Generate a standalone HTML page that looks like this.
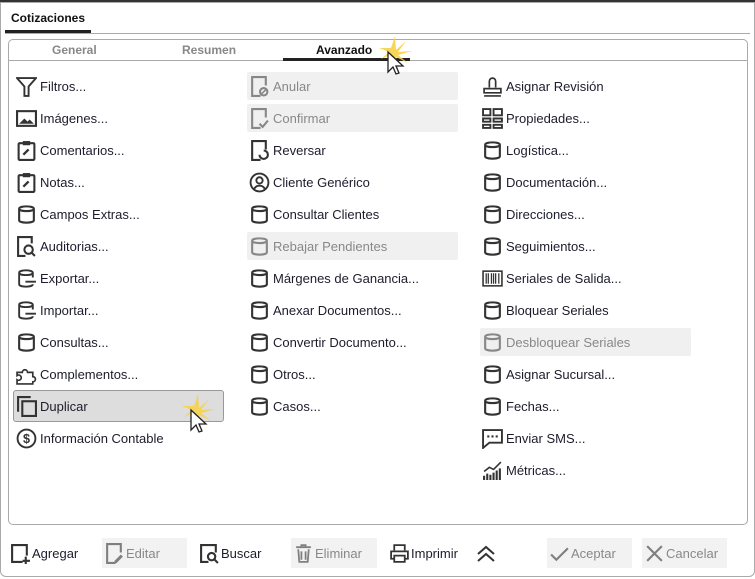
<!DOCTYPE html>
<html><head><meta charset="utf-8"><style>
*{box-sizing:border-box}
body{margin:0;width:755px;height:579px;background:#fff;font-family:"Liberation Sans",sans-serif;font-size:13px;color:#1c1c2c;position:relative;overflow:hidden}
.win{position:absolute;left:0;top:2px;width:755px;height:575px;border:1px solid #aaa;border-radius:0 0 6px 6px}
.topbar{position:absolute;left:0;top:0;width:755px;height:2px;background:#333}
.ttab{position:absolute;left:11px;top:11px;font-weight:bold;font-size:12px;color:#111}
.tline{position:absolute;left:5px;top:30px;width:86px;height:3px;background:#222}
.hr{position:absolute;left:5px;top:33px;width:745px;height:1px;background:#aaa}
.panel{position:absolute;left:8px;top:39px;width:740px;height:486px;border:1px solid #aaa;border-radius:5px}
.tabs{position:absolute;left:9px;top:40px;width:738px;height:21px;border-bottom:1px solid #aaa}
.th{position:absolute;top:43px;font-weight:bold;font-size:12px;color:#888}
.uline{position:absolute;left:283px;top:58px;width:127px;height:3px;background:#222}
.it{position:absolute;height:28px;line-height:30px;width:211px;padding-left:26px;white-space:nowrap}
.it svg{position:absolute;left:2px;top:4px;width:21px;height:21px}
.dis{background:#f0f0f0;color:#888;border-radius:2px}
.dis svg{opacity:.55}
.sel{background:#ddd;border:1px solid #999;border-radius:3px;height:32px;line-height:32px}
.bb{position:absolute;top:538px;height:30px;line-height:31px;padding-left:24px;white-space:nowrap}
.bb svg{position:absolute;left:2px;top:5px;width:21px;height:21px}
.bd{background:#f2f2f2;color:#888}
.bd svg{opacity:.6}
</style></head><body>
<svg width="0" height="0" style="position:absolute">
<defs>
<symbol id="cyl" viewBox="0 0 20 20"><path d="M3 4.5c0-3 14-3 14 0v11c0 3-14 3-14 0z M3 4.5c0 3 14 3 14 0" fill="none" stroke="#333" stroke-width="2"/></symbol>
<symbol id="clip" viewBox="0 0 20 20"><rect x="2.5" y="3" width="15" height="16" rx="1" fill="none" stroke="#333" stroke-width="2"/><rect x="6.5" y="1" width="7" height="4" fill="#333"/><path d="M7 14l5-5" stroke="#333" stroke-width="2.2"/></symbol>
<symbol id="doc" viewBox="0 0 20 20"><path d="M11 19H3V1h13v8" fill="none" stroke="#333" stroke-width="2"/></symbol>
</defs></svg>
<div class="topbar"></div>
<div class="win"></div>
<div class="ttab">Cotizaciones</div><div class="tline"></div><div class="hr"></div>
<div class="panel"></div><div class="tabs"></div>
<div class="th" style="left:52px">General</div>
<div class="th" style="left:182px">Resumen</div>
<div class="th" style="left:316px;color:#111">Avanzado</div>
<div class="uline"></div>

<div class="it" style="left:14px;top:72px"><svg viewBox="0 0 20 20"><path d="M1 2h18l-7 8v9h-4v-9z" fill="none" stroke="#333" stroke-width="1.8"/></svg>Filtros...</div>
<div class="it" style="left:14px;top:104px"><svg viewBox="0 0 20 20"><rect x="1" y="3" width="18" height="14" fill="none" stroke="#333" stroke-width="2"/><path d="M3 15l5-5 3 3 2-2 4 4z" fill="#333"/></svg>Imágenes...</div>
<div class="it" style="left:14px;top:136px"><svg viewBox="0 0 20 20"><use href="#clip"/></svg>Comentarios...</div>
<div class="it" style="left:14px;top:168px"><svg viewBox="0 0 20 20"><use href="#clip"/></svg>Notas...</div>
<div class="it" style="left:14px;top:200px"><svg viewBox="0 0 20 20"><use href="#cyl"/></svg>Campos Extras...</div>
<div class="it" style="left:14px;top:232px"><svg viewBox="0 0 20 20"><path d="M9 19H2V1h13v6" fill="none" stroke="#333" stroke-width="2"/><circle cx="12" cy="13" r="4" fill="none" stroke="#333" stroke-width="2"/><path d="M15 16l3 3" stroke="#333" stroke-width="2"/></svg>Auditorias...</div>
<div class="it" style="left:14px;top:264px"><svg viewBox="0 0 20 20"><path d="M16 9V4.5c0-3-13-3-13 0v11c0 3 13 3 13 0 M3 4.5c0 3 13 3 13 0 M9 13h10" fill="none" stroke="#333" stroke-width="1.8"/></svg>Exportar...</div>
<div class="it" style="left:14px;top:296px"><svg viewBox="0 0 20 20"><path d="M16 9V4.5c0-3-13-3-13 0v11c0 3 13 3 13 0 M3 4.5c0 3 13 3 13 0 M9 13h10" fill="none" stroke="#333" stroke-width="1.8"/></svg>Importar...</div>
<div class="it" style="left:14px;top:328px"><svg viewBox="0 0 20 20"><use href="#cyl"/></svg>Consultas...</div>
<div class="it" style="left:14px;top:360px"><svg viewBox="0 0 20 20"><path d="M1 8h5a2.5 2.5 0 1 1 5 0h5v4a2.5 2.5 0 1 1 0 5v2H1v-4a2.5 2.5 0 1 0 0-4z" fill="none" stroke="#333" stroke-width="1.6"/></svg>Complementos...</div>
<div class="it sel" style="left:13px;top:390px"><svg viewBox="0 0 20 20" style="top:5px"><rect x="6" y="5" width="13" height="14" fill="none" stroke="#333" stroke-width="2"/><path d="M2 15V1h12" fill="none" stroke="#333" stroke-width="2"/></svg>Duplicar</div>
<div class="it" style="left:14px;top:424px"><svg viewBox="0 0 20 20"><circle cx="10" cy="10" r="8.5" fill="none" stroke="#333" stroke-width="1.8"/><text x="10" y="14.5" font-size="12" text-anchor="middle" font-weight="bold" fill="#333" font-family="Liberation Sans">$</text></svg>Información Contable</div>

<div class="it dis" style="left:247px;top:72px"><svg viewBox="0 0 20 20"><use href="#doc"/><circle cx="14" cy="15" r="3.5" fill="none" stroke="#333" stroke-width="2"/><path d="M12 17l4-4" stroke="#333" stroke-width="1.5"/></svg>Anular</div>
<div class="it dis" style="left:247px;top:104px"><svg viewBox="0 0 20 20"><use href="#doc"/><path d="M10 15l3 3 5-6" fill="none" stroke="#333" stroke-width="2"/></svg>Confirmar</div>
<div class="it" style="left:247px;top:136px"><svg viewBox="0 0 20 20"><use href="#doc"/><path d="M10 14a4 4 0 1 0 4-4" fill="none" stroke="#333" stroke-width="2"/></svg>Reversar</div>
<div class="it" style="left:247px;top:168px"><svg viewBox="0 0 20 20"><circle cx="10" cy="10" r="8.5" fill="none" stroke="#333" stroke-width="1.8"/><circle cx="10" cy="8" r="3" fill="none" stroke="#333" stroke-width="1.8"/><path d="M5 16c2-4 8-4 10 0" fill="none" stroke="#333" stroke-width="1.8"/></svg>Cliente Genérico</div>
<div class="it" style="left:247px;top:200px"><svg viewBox="0 0 20 20"><use href="#cyl"/></svg>Consultar Clientes</div>
<div class="it dis" style="left:247px;top:232px"><svg viewBox="0 0 20 20"><use href="#cyl"/></svg>Rebajar Pendientes</div>
<div class="it" style="left:247px;top:264px"><svg viewBox="0 0 20 20"><use href="#cyl"/></svg>Márgenes de Ganancia...</div>
<div class="it" style="left:247px;top:296px"><svg viewBox="0 0 20 20"><use href="#cyl"/></svg>Anexar Documentos...</div>
<div class="it" style="left:247px;top:328px"><svg viewBox="0 0 20 20"><use href="#cyl"/></svg>Convertir Documento...</div>
<div class="it" style="left:247px;top:360px"><svg viewBox="0 0 20 20"><use href="#cyl"/></svg>Otros...</div>
<div class="it" style="left:247px;top:392px"><svg viewBox="0 0 20 20"><use href="#cyl"/></svg>Casos...</div>

<div class="it" style="left:480px;top:72px"><svg viewBox="0 0 20 20"><path d="M7 11V5a3 3 0 0 1 6 0v6 M2 16v-4h16v4z M2 19h16" fill="none" stroke="#333" stroke-width="1.6"/></svg>Asignar Revisión</div>
<div class="it" style="left:480px;top:104px"><svg viewBox="0 0 20 20"><path d="M1 1h7v6H1z M1 10h7v3H1z M1 16h7v3H1z M11 1h8v6h-8z M11 10h8v3h-8z M11 16h8v3h-8z" fill="none" stroke="#333" stroke-width="1.8"/></svg>Propiedades...</div>
<div class="it" style="left:480px;top:136px"><svg viewBox="0 0 20 20"><use href="#cyl"/></svg>Logística...</div>
<div class="it" style="left:480px;top:168px"><svg viewBox="0 0 20 20"><use href="#cyl"/></svg>Documentación...</div>
<div class="it" style="left:480px;top:200px"><svg viewBox="0 0 20 20"><use href="#cyl"/></svg>Direcciones...</div>
<div class="it" style="left:480px;top:232px"><svg viewBox="0 0 20 20"><use href="#cyl"/></svg>Seguimientos...</div>
<div class="it" style="left:480px;top:264px"><svg viewBox="0 0 20 20"><rect x="1" y="3" width="18" height="14" fill="none" stroke="#333" stroke-width="1.5"/><path d="M4 5v10M6 5v10M9 5v10M11 5v10M13 5v10M16 5v10" stroke="#333" stroke-width="1.2"/></svg>Seriales de Salida...</div>
<div class="it" style="left:480px;top:296px"><svg viewBox="0 0 20 20"><use href="#cyl"/></svg>Bloquear Seriales</div>
<div class="it dis" style="left:480px;top:328px"><svg viewBox="0 0 20 20"><use href="#cyl"/></svg>Desbloquear Seriales</div>
<div class="it" style="left:480px;top:360px"><svg viewBox="0 0 20 20"><use href="#cyl"/></svg>Asignar Sucursal...</div>
<div class="it" style="left:480px;top:392px"><svg viewBox="0 0 20 20"><use href="#cyl"/></svg>Fechas...</div>
<div class="it" style="left:480px;top:424px"><svg viewBox="0 0 20 20"><path d="M1 2h18v12H7l-6 5z" fill="none" stroke="#333" stroke-width="1.8"/><path d="M5 8h2M9 8h2M13 8h2" stroke="#333" stroke-width="2"/></svg>Enviar SMS...</div>
<div class="it" style="left:480px;top:456px"><svg viewBox="0 0 20 20"><path d="M2 19v-4M5 19v-6M8 19v-5M11 19v-7M14 19v-9M17 19v-11" stroke="#333" stroke-width="2"/><path d="M2 11l5-4 4 2 7-7" fill="none" stroke="#333" stroke-width="1.5"/></svg>Métricas...</div>

<div class="bb" style="left:8px"><svg viewBox="0 0 20 20"><path d="M12 18H2V2h14v10 M15 13v7 M12 17h7" fill="none" stroke="#333" stroke-width="2"/></svg>Agregar</div>
<div class="bb bd" style="left:102px;width:85px"><svg viewBox="0 0 20 20"><use href="#doc"/><path d="M10 17l6-6 2 2-6 6h-2z" fill="#333"/></svg>Editar</div>
<div class="bb" style="left:197px"><svg viewBox="0 0 20 20"><path d="M9 18H2V2h14v7" fill="none" stroke="#333" stroke-width="2"/><circle cx="12" cy="13" r="3.5" fill="none" stroke="#333" stroke-width="2"/><path d="M15 16l3 3" stroke="#333" stroke-width="2"/></svg>Buscar</div>
<div class="bb bd" style="left:291px;width:86px"><svg viewBox="0 0 20 20"><path d="M3 4h14M8 4V2h4v2M5 6l1 12h8l1-12M8 8v8M12 8v8" fill="none" stroke="#333" stroke-width="1.7"/></svg>Eliminar</div>
<div class="bb" style="left:387px"><svg viewBox="0 0 20 20"><path d="M5 7V2h10v5 M5 15H2V8h16v7h-3 M5 12h10v6H5z" fill="none" stroke="#333" stroke-width="1.7"/></svg>Imprimir</div>
<svg style="position:absolute;left:475px;top:544px" width="22" height="20" viewBox="0 0 22 20"><path d="M3 10l8-7 8 7M3 17l8-7 8 7" fill="none" stroke="#333" stroke-width="2"/></svg>
<div class="bb bd" style="left:547px;width:85px"><svg viewBox="0 0 20 20"><path d="M2 11l5 5L18 5" fill="none" stroke="#333" stroke-width="2"/></svg>Aceptar</div>
<div class="bb bd" style="left:642px;width:85px"><svg viewBox="0 0 20 20"><path d="M3 3l14 14M17 3L3 17" fill="none" stroke="#333" stroke-width="2"/></svg>Cancelar</div>

<svg style="position:absolute;left:375px;top:34px" width="40" height="42" viewBox="0 0 40 42"><path d="M20 2l1 14 10-9-8 11 14-1-14 4 10 8-12-6 2 12-5-12-4 10 1-12-9 4 8-7-10-4 12 0z" fill="#f6d24a" opacity=".9"/><path d="M13 18v20l5-5 3 7 3-1-3-7h7z" fill="#fff" stroke="#222" stroke-width="1.3"/></svg>
<svg style="position:absolute;left:178px;top:392px" width="40" height="42" viewBox="0 0 40 42"><path d="M20 2l1 14 10-9-8 11 14-1-14 4 10 8-12-6 2 12-5-12-4 10 1-12-9 4 8-7-10-4 12 0z" fill="#f6d24a" opacity=".9"/><path d="M13 18v20l5-5 3 7 3-1-3-7h7z" fill="#fff" stroke="#222" stroke-width="1.3"/></svg>
</body></html>
